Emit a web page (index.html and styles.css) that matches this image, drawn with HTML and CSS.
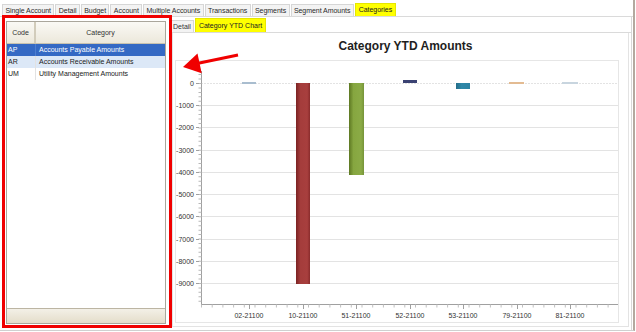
FILE: index.html
```html
<!DOCTYPE html>
<html>
<head>
<meta charset="utf-8">
<link rel="stylesheet" href="styles.css">
</head>
<body>
<div class="window">
  <div class="tabstrip">
    <div class="tab">Single Account</div>
    <div class="tab">Detail</div>
    <div class="tab">Budget</div>
    <div class="tab">Account</div>
    <div class="tab">Multiple Accounts</div>
    <div class="tab">Transactions</div>
    <div class="tab">Segments</div>
    <div class="tab">Segment Amounts</div>
    <div class="tab active">Categories</div>
  </div>
  <div class="content">
    <div class="left">
      <div class="grid">
        <div class="grid-head">
          <div class="hcell code">Code</div>
          <div class="hcell cat">Category</div>
        </div>
        <div class="grid-body">
          <div class="row selected"><div class="cell code">AP</div><div class="cell cat">Accounts Payable Amounts</div></div>
          <div class="row alt"><div class="cell code">AR</div><div class="cell cat">Accounts Receivable Amounts</div></div>
          <div class="row"><div class="cell code">UM</div><div class="cell cat">Utility Management Amounts</div></div>
        </div>
        <div class="grid-foot"></div>
      </div>
    </div>
    <div class="right">
      <div class="subtabs">
        <div class="subtab">Detail</div>
        <div class="subtab active">Category YTD Chart</div>
      </div>
      <div class="chart-page">
        <svg class="chart" width="455" height="293" viewBox="0 0 455 293">
          <defs>
            <linearGradient id="gRed" x1="0" x2="1" y1="0" y2="0">
              <stop offset="0" stop-color="#7a2222"/>
              <stop offset="0.3" stop-color="#a43c3b"/>
              <stop offset="0.8" stop-color="#a83f3e"/>
              <stop offset="1" stop-color="#8a2c2c"/>
            </linearGradient>
            <linearGradient id="gGreen" x1="0" x2="1" y1="0" y2="0">
              <stop offset="0" stop-color="#5d7822"/>
              <stop offset="0.3" stop-color="#86a640"/>
              <stop offset="0.8" stop-color="#8bab46"/>
              <stop offset="1" stop-color="#76943a"/>
            </linearGradient>
            <linearGradient id="gTeal" x1="0" x2="1" y1="0" y2="0">
              <stop offset="0" stop-color="#236c88"/>
              <stop offset="0.4" stop-color="#2f88a8"/>
              <stop offset="1" stop-color="#2c82a2"/>
            </linearGradient>
          </defs>
          <g transform="translate(-173 -33)">
            <text class="chart-title" x="405.5" y="50" text-anchor="middle">Category YTD Amounts</text>
            <rect x="175.5" y="60.5" width="443" height="262" fill="none" stroke="#e6e6e6"/>
            <g stroke="#e3e3e3" stroke-width="1">
              <line x1="201" x2="618" y1="83.5" y2="83.5" stroke-dasharray="2 1"/>
              <line x1="201" x2="618" y1="105.5" y2="105.5"/>
              <line x1="201" x2="618" y1="127.5" y2="127.5"/>
              <line x1="201" x2="618" y1="150.5" y2="150.5"/>
              <line x1="201" x2="618" y1="172.5" y2="172.5"/>
              <line x1="201" x2="618" y1="194.5" y2="194.5"/>
              <line x1="201" x2="618" y1="216.5" y2="216.5"/>
              <line x1="201" x2="618" y1="239.5" y2="239.5"/>
              <line x1="201" x2="618" y1="261.5" y2="261.5"/>
              <line x1="201" x2="618" y1="283.5" y2="283.5"/>
            </g>
            <g stroke="#a0a0a0" stroke-width="1">
              <line x1="201.5" x2="201.5" y1="71" y2="305"/>
              <line x1="201" x2="618" y1="304.5" y2="304.5"/>
              <line x1="200" x2="200" y1="74.1" y2="304" stroke-width="3" stroke-dasharray="1 3.444" stroke="#b8b8b8"/>
              <line x1="201" x2="618" y1="306" y2="306" stroke-width="3" stroke-dasharray="1 9.7" stroke="#c0c0c0"/>
              <line x1="196" x2="199" y1="83.5" y2="83.5"/>
              <line x1="196" x2="199" y1="105.5" y2="105.5"/>
              <line x1="196" x2="199" y1="127.5" y2="127.5"/>
              <line x1="196" x2="199" y1="150.5" y2="150.5"/>
              <line x1="196" x2="199" y1="172.5" y2="172.5"/>
              <line x1="196" x2="199" y1="194.5" y2="194.5"/>
              <line x1="196" x2="199" y1="216.5" y2="216.5"/>
              <line x1="196" x2="199" y1="239.5" y2="239.5"/>
              <line x1="196" x2="199" y1="261.5" y2="261.5"/>
              <line x1="196" x2="199" y1="283.5" y2="283.5"/>
              <line x1="249.5" x2="249.5" y1="305" y2="309"/>
              <line x1="303.5" x2="303.5" y1="305" y2="309"/>
              <line x1="356.5" x2="356.5" y1="305" y2="309"/>
              <line x1="410.5" x2="410.5" y1="305" y2="309"/>
              <line x1="463.5" x2="463.5" y1="305" y2="309"/>
              <line x1="517.5" x2="517.5" y1="305" y2="309"/>
              <line x1="570.5" x2="570.5" y1="305" y2="309"/>
            </g>
            <g class="axis-label" text-anchor="end">
              <text x="194" y="86">0</text>
              <text x="194" y="108">-1000</text>
              <text x="194" y="130">-2000</text>
              <text x="194" y="153">-3000</text>
              <text x="194" y="175">-4000</text>
              <text x="194" y="197">-5000</text>
              <text x="194" y="219">-6000</text>
              <text x="194" y="242">-7000</text>
              <text x="194" y="264">-8000</text>
              <text x="194" y="286">-9000</text>
            </g>
            <g class="axis-label" text-anchor="middle">
              <text x="249" y="318">02-21100</text>
              <text x="303" y="318">10-21100</text>
              <text x="356" y="318">51-21100</text>
              <text x="410" y="318">52-21100</text>
              <text x="463" y="318">53-21100</text>
              <text x="517" y="318">79-21100</text>
              <text x="570" y="318">81-21100</text>
            </g>
            <rect x="242" y="82" width="14" height="2" fill="#a9bdcf"/>
            <rect x="296" y="83" width="14" height="201" fill="url(#gRed)"/>
            <rect x="349" y="83" width="15" height="92" fill="url(#gGreen)"/>
            <rect x="403" y="80" width="14" height="3" fill="#3a4272"/>
            <rect x="456" y="83" width="14" height="6" fill="url(#gTeal)"/>
            <rect x="509" y="82" width="15" height="2" fill="#e3bb92"/>
            <rect x="562" y="82" width="16" height="2" fill="#c8d5df"/>
          </g>
        </svg>
      </div>
    </div>
  </div>
  <div class="highlight"></div>
  <svg class="arrow" width="636" height="332" viewBox="0 0 636 332">
    <line x1="238" y1="55" x2="197" y2="63.5" stroke="#f00000" stroke-width="3"/>
    <polygon points="183,67 197.5,53.5 201.7,73.2" fill="#f00000"/>
  </svg>
</div>
</body>
</html>
```

FILE: styles.css
```css
* { box-sizing: border-box; }
html, body { margin: 0; padding: 0; background: #fff; }
body {
  font-family: "Liberation Sans", Arial, sans-serif;
  font-size: 7px;
  color: #222;
}
.window {
  position: relative;
  width: 635px;
  height: 331px;
  border-right: 2px solid #b3a99f;
  border-bottom: 1px solid #d0d0d0;
  display: flex;
  flex-direction: column;
}
.tabstrip {
  flex: none;
  height: 17px;
  display: flex;
  align-items: flex-end;
  gap: 1px;
  padding-left: 2px;
  border-bottom: 1px solid #dadada;
}
.tab {
  height: 12px;
  line-height: 11px;
  padding: 0 2.4px;
  border: 1px solid #d6d6d6;
  border-bottom: none;
  background: #f3f3f3;
  color: #2a2a2a;
  white-space: nowrap;
  letter-spacing: -0.05px;
}
.tab.active {
  height: 13px;
  line-height: 12px;
  padding: 0 3px;
  background: #ffff00;
  border-color: #e6e600;
  color: #222;
}
.content {
  flex: 1;
  display: flex;
  margin-right: 1px;
  border-right: 1px solid #d8d8d8;
}
.left {
  flex: none;
  width: 170px;
  padding: 4px 0 0 6px;
}
.grid {
  width: 160px;
  height: 303px;
  border: 1px solid #aaa69c;
  display: flex;
  flex-direction: column;
  background: #fff;
}
.grid-head {
  flex: none;
  height: 22px;
  display: flex;
  background: linear-gradient(#faf9f5, #ece8db);
  border-bottom: 1px solid #c8c2b0;
}
.hcell {
  display: flex;
  align-items: center;
  justify-content: center;
  color: #333;
}
.hcell.code {
  width: 29px;
  border-right: 2px solid #d2ccbb;
}
.hcell.cat { flex: 1; }
.grid-body { flex: 1; }
.row {
  height: 12px;
  line-height: 12px;
  display: flex;
  color: #222;
}
.cell { white-space: nowrap; }
.row .code {
  width: 29px;
  padding-left: 1px;
  border-right: 1px solid #e2e2e2;
}
.row .cat { padding-left: 3px; }
.row.selected { background: #3469c4; color: #fff; }
.row.selected .code { border-right-color: #4d7fd0; }
.row.alt { background: #dce8f7; }
.grid-foot {
  flex: none;
  height: 15px;
  background: linear-gradient(#f3f0e7, #e4ddca);
  border-top: 1px solid #bcb5a3;
}
.right {
  flex: 1;
  display: flex;
  flex-direction: column;
}
.subtabs {
  flex: none;
  height: 16px;
  display: flex;
  align-items: flex-end;
  gap: 1px;
  border-bottom: 1px solid #dadada;
}
.subtab {
  height: 12px;
  line-height: 11px;
  padding: 0 2px;
  border: 1px solid #d6d6d6;
  border-bottom: none;
  background: #f3f3f3;
  color: #333;
  white-space: nowrap;
}
.subtab.active {
  height: 14px;
  line-height: 13px;
  padding: 0 3px;
  background: #ffff00;
  border-color: #e6e600;
  color: #222;
}
.chart-page {
  margin: 0 2px;
  height: 294px;
  border: 1px solid #e3e3e3;
  border-top: none;
}
.chart { display: block; }
.chart-title {
  font-family: "Liberation Sans", Arial, sans-serif;
  font-size: 12px;
  font-weight: bold;
  fill: #1e1e1e;
}
.axis-label {
  font-family: "Liberation Sans", Arial, sans-serif;
  font-size: 7px;
  fill: #333;
}
.highlight {
  position: absolute;
  left: 2px;
  top: 15px;
  width: 170px;
  height: 313px;
  border: 3px solid #f00000;
}
.arrow {
  position: absolute;
  left: 0;
  top: 0;
  pointer-events: none;
}
```
